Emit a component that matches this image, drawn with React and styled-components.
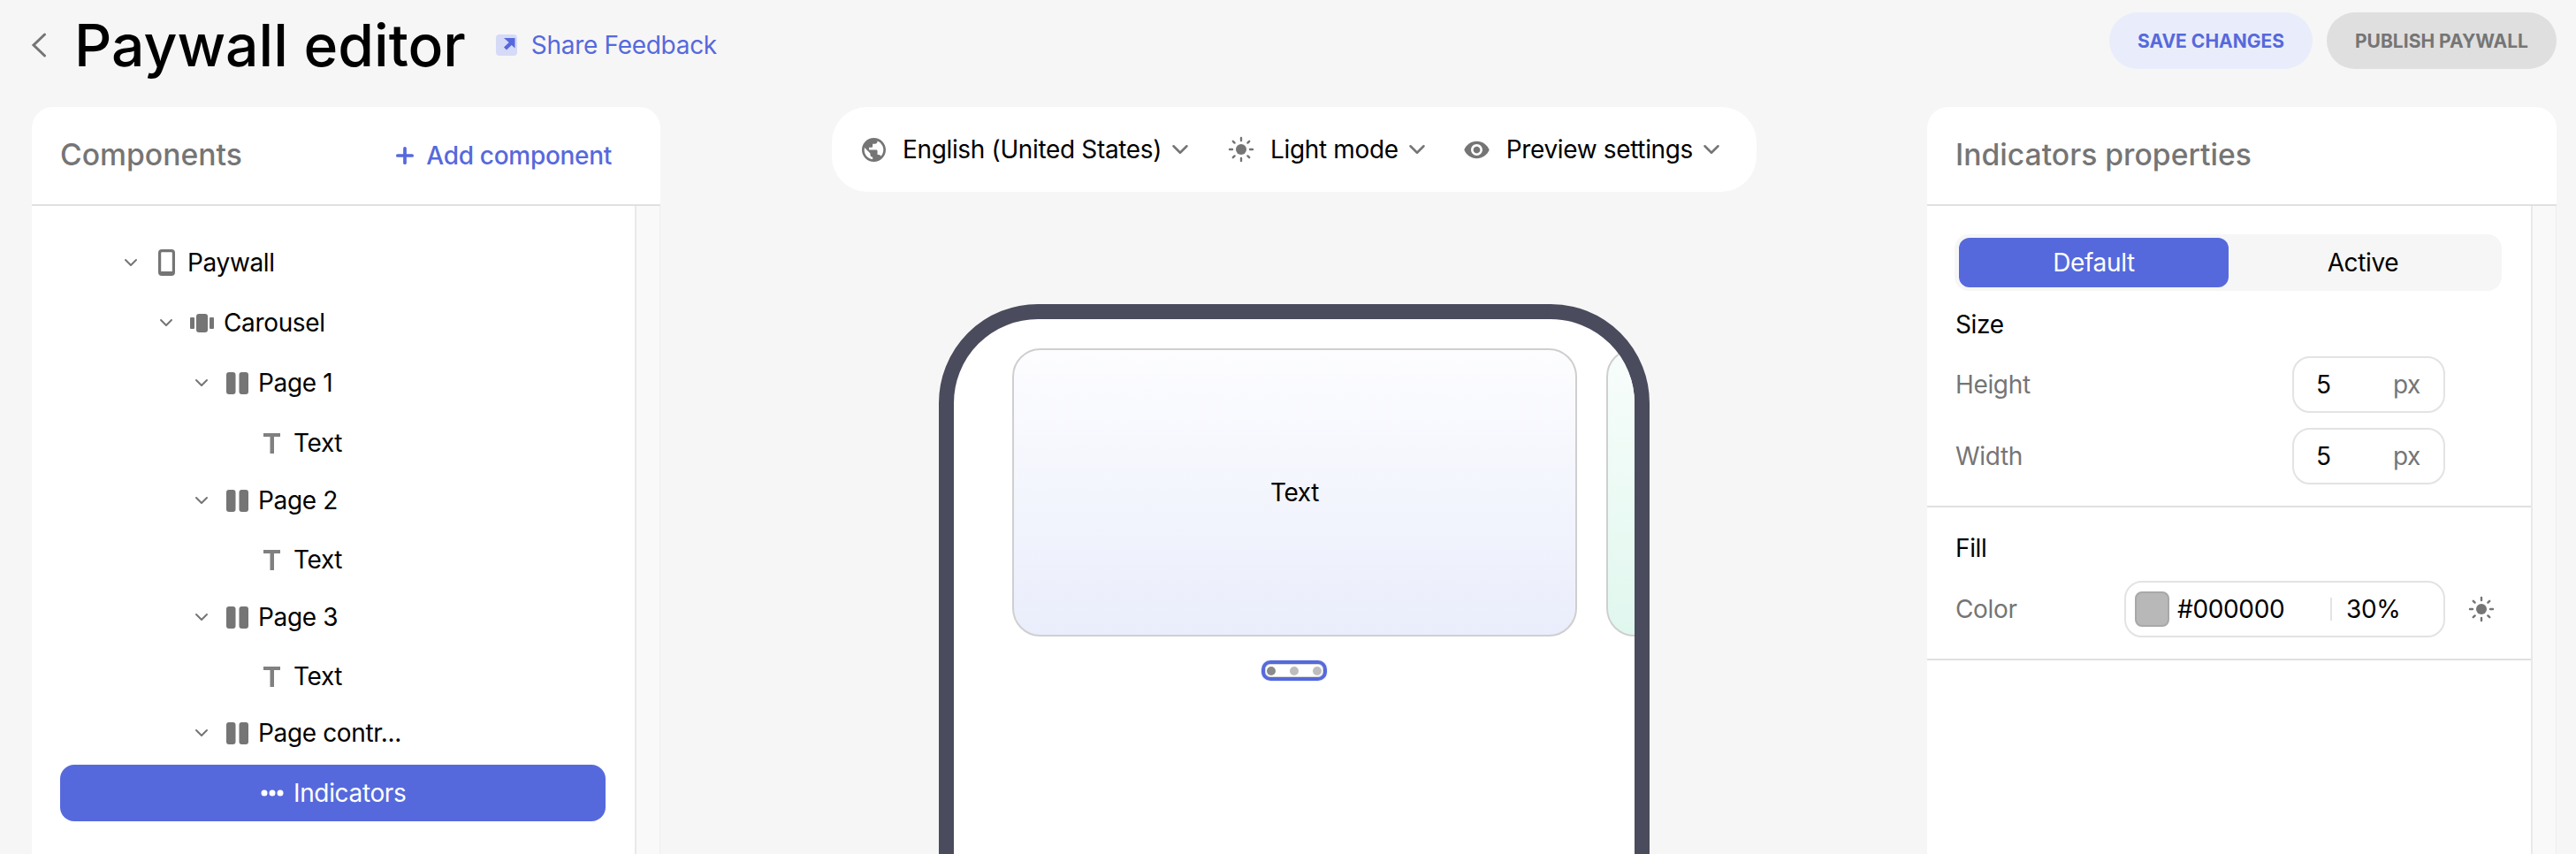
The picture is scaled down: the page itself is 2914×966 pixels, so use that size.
import React from 'react';
import styled, { createGlobalStyle } from 'styled-components';
import { ChevronDown, Plus } from 'lucide-react';

const Global = createGlobalStyle`
  html, body { margin: 0; padding: 0; background: #f6f6f6; }
  body { font-family: Inter, "Liberation Sans", sans-serif; color: #000; letter-spacing: -0.35px; }
  * { box-sizing: border-box; }
`;

const Page = styled.div`
  width: 2914px; height: 966px; overflow: hidden; background: #f6f6f6;
  display: flex; flex-direction: column;
`;
const TopBar = styled.header`
  height: 121px; flex: none; display: flex; padding: 14px 22px 0 30px; align-items: flex-start;
`;
const BackBtn = styled.div`
  width: 28px; height: 74px; display: flex; align-items: center; justify-content: center; margin-right: 26px;
`;
const Title = styled.h1`
  margin: 0; font-size: 66px; line-height: 74px; font-weight: 500; white-space: nowrap; letter-spacing: 0;
`;
const Feedback = styled.a`
  display: flex; align-items: center; gap: 16px; margin-left: 34px; height: 74px; color: #5669dc; font-size: 28px; letter-spacing: -0.3px;
`;
const FeedbackIcon = styled.span`
  width: 24px; height: 24px; border-radius: 4px; background: #d5daf6; display: flex; align-items: center; justify-content: center;
`;
const Actions = styled.div`
  margin-left: auto; display: flex; gap: 16px;
`;
const Pill = styled.button`
  height: 64px; width: ${p => p.$w}px; border: 0; border-radius: 32px; font: 700 21px Inter, sans-serif; padding: 0;
  background: ${p => p.$primary ? '#e9edfb' : '#dfdfdf'}; color: ${p => p.$primary ? '#5669dc' : '#757575'};
`;
const Workspace = styled.main`
  flex: 1; min-height: 0; display: grid; grid-template-columns: 711px 1fr 712px; padding: 0 22px 0 36px;
`;
const Panel = styled.section`
  background: #fff; border-radius: 24px 24px 0 0; display: flex; flex-direction: column; min-height: 0;
`;
const PanelHead = styled.div`
  height: 112px; flex: none; border-bottom: 2px solid #e0e0e0; padding: 0 32px 0 32px; display: flex; align-items: center; justify-content: space-between;
`;
const PanelTitle = styled.h2`
  margin: 0 0 4px; font-size: 33.7px; font-weight: 500; color: #757575; letter-spacing: 0;
`;
const AddBtn = styled.div`
  display: flex; align-items: center; gap: 10px; color: #5669dc; font-size: 28px; font-weight: 500; padding-right: 23px; letter-spacing: -0.3px;
`;
const PanelBody = styled.div`
  flex: 1; min-height: 0; display: grid; grid-template-columns: 1fr 29px;
`;
const Track = styled.div`
  background: #f9f9f9; border-left: 2px solid #e9e9e9; border-right: 1px solid #eee;
`;
const Tree = styled.div`
  padding: 32px 33px 0 32px; display: flex; flex-direction: column;
`;
const Row = styled.div`
  height: 64px; flex: none; display: flex; align-items: center; border-radius: 16px;
  margin-bottom: ${p => p.$after ?? 0}px;
  background: ${p => p.$selected ? '#5669dc' : 'transparent'};
  color: ${p => p.$selected ? '#fff' : '#000'};
  font-size: 28px;
`;
const Caret = styled.span`
  width: 24px; display: flex; justify-content: center; color: #757575; margin-left: ${p => p.$left}px; flex: none;
`;
const NodeIcon = styled.span`
  display: flex; justify-content: center; margin-left: ${p => p.$left ?? 0}px; width: ${p => p.$w}px; flex: none; margin-right: ${p => p.$right}px;
`;
const Center = styled.div`
  display: flex; flex-direction: column; align-items: center; min-width: 0; padding-left: 1px;
`;
const Toolbar = styled.div`
  width: 1046px; height: 96px; flex: none; background: #fff; border-radius: 40px; display: flex; align-items: center; padding: 0 30px; font-size: 28px;
`;
const Dropdown = styled.div`
  display: flex; align-items: center; margin-right: ${p => p.$mr}px; white-space: nowrap;
`;
const ToolIcon = styled.span`
  width: 34px; display: flex; justify-content: center; margin-right: 16px; color: #757575;
`;
const DropCaret = styled.span`
  display: flex; margin-left: 6px; color: #757575;
`;
const Phone = styled.div`
  width: 804px; height: 900px; flex: none; margin-top: 127px; border: 17px solid #4a4b5c; border-radius: 112px; background: #fff; overflow: hidden;
  display: flex; flex-direction: column;
`;
const Cards = styled.div`
  display: flex; gap: 33px; padding: 33px 0 0 66px; flex: none;
`;
const Card = styled.div`
  width: 639px; height: 326px; flex: none; border: 2px solid #cfcfcf; border-radius: 32px; font-size: 28px;
  display: flex; align-items: center; justify-content: center;
  background: linear-gradient(${p => p.$from}, ${p => p.$to});
`;
const Indicator = styled.div`
  align-self: center; width: 74px; height: 23px; margin-top: 27px; border: 4px solid #5669dc; border-radius: 10px; padding: 0 2px; display: flex; align-items: center; justify-content: space-between;
  box-shadow: inset 0 0 0 1px #d8d8d8, 0 0 2px rgba(86, 105, 220, 0.4);
`;
const Dot = styled.i`
  width: 10px; height: 10px; border-radius: 50%; background: ${p => p.$on ? '#8a8a8a' : '#bdbdbd'};
`;
const PropsBody = styled.div`
  display: flex; flex-direction: column;
`;
const Section = styled.div`
  padding: ${p => p.$pt}px 0 24px 32px; border-bottom: 2px solid #e0e0e0; display: flex; flex-direction: column;
`;
const Tabs = styled.div`
  width: 619px; height: 64px; margin-left: -1px; background: #f6f6f6; border-radius: 16px; padding: 4px 5px; display: grid; grid-template-columns: 305px 1fr;
`;
const Tab = styled.div`
  border-radius: 12px; display: flex; align-items: center; justify-content: center; font-size: 28px;
  background: ${p => p.$active ? '#5669dc' : 'transparent'}; color: ${p => p.$active ? '#fff' : '#000'};
`;
const SectionLabel = styled.div`
  font-size: 28px; line-height: 34px; margin-top: ${p => p.$mt}px; margin-bottom: ${p => p.$mb}px;
`;
const PropRow = styled.div`
  display: grid; grid-template-columns: 1fr auto 97px; align-items: center; margin-bottom: ${p => p.$mb ?? 0}px;
`;
const PropLabel = styled.span`
  font-size: 28px; color: #757575;
`;
const NumberField = styled.div`
  width: 173px; height: 64px; border: 2px solid #e3e3e3; border-radius: 20px; padding: 0 26px 0 25px; display: flex; align-items: center; justify-content: space-between; font-size: 28px;
`;
const Unit = styled.span`
  color: #757575;
`;
const ColorField = styled.div`
  width: 363px; height: 64px; border: 2px solid #e3e3e3; border-radius: 20px; padding: 0 10px; display: flex; align-items: center; font-size: 28px;
`;
const Swatch = styled.span`
  width: 39px; height: 40px; border-radius: 8px; background: #b8b8b8; border: 2px solid #a8a8a8; margin-right: 9px; flex: none;
`;
const Hex = styled.span`
  width: 173px; flex: none;
`;
const Sep = styled.span`
  width: 2px; height: 26px; background: #e3e3e3; margin-right: 16px; flex: none;
`;
const SunSlot = styled.span`
  display: flex; padding-left: 26px; color: #757575;
`;

const Sun = ({ size = 30, color = '#757575' }) => (
  <svg width={size} height={size} viewBox="0 0 30 30" fill="none">
    <circle cx="15" cy="15" r="6" fill={color} />
    <g stroke={color} strokeWidth="2.4" strokeLinecap="round">
      <path d="M15 2v3M15 25v3M2 15h3M25 15h3M5.800 5.800 7.600 7.600M22.400 22.400l1.800 1.800M5.800 24.200 7.600 22.400M22.400 7.600l1.800-1.800" />
    </g>
  </svg>
);
const Globe = () => (
  <svg width="27" height="27" viewBox="2 2 20 20" fill="#757575">
    <path d="M12 2C6.480 2 2 6.480 2 12s4.480 10 10 10 10-4.480 10-10S17.520 2 12 2zm-1 17.930c-3.950-.49-7-3.850-7-7.930 0-.62.08-1.210.21-1.790L9 15v1c0 1.100.9 2 2 2v1.930zm6.900-2.540c-.26-.81-1-1.390-1.900-1.390h-1v-3c0-.55-.45-1-1-1H8v-2h2c.55 0 1-.45 1-1V7h2c1.100 0 2-.9 2-2v-.41c2.930 1.190 5 4.060 5 7.410 0 2.080-.8 3.970-2.100 5.390z" />
  </svg>
);
const Eye = () => (
  <svg width="31" height="31" viewBox="0 0 24 24" fill="#757575">
    <path d="M12 4.500C7 4.500 2.730 7.610 1 12c1.730 4.390 6 7.500 11 7.500s9.270-3.110 11-7.500c-1.730-4.390-6-7.500-11-7.500zM12 17c-2.760 0-5-2.240-5-5s2.240-5 5-5 5 2.240 5 5-2.240 5-5 5zm0-8c-1.660 0-3 1.340-3 3s1.340 3 3 3 3-1.340 3-3-1.340-3-3-3z" />
  </svg>
);
const PhoneIcon = () => (
  <svg width="19" height="30" viewBox="0 0 19 30">
    <rect x="1.600" y="1.600" width="15.800" height="26.800" rx="2.500" fill="none" stroke="#757575" strokeWidth="3.200" />
    <rect x="1" y="25" width="17" height="4" fill="#757575" />
  </svg>
);
const CarouselIcon = () => (
  <svg width="27" height="21" viewBox="0 0 27 21" fill="#757575">
    <rect x="0" y="4" width="5" height="13" rx="1" />
    <rect x="7" y="0" width="13" height="21" rx="3" />
    <rect x="22" y="4" width="5" height="13" rx="1" />
  </svg>
);
const ColumnsIcon = () => (
  <svg width="25" height="25" viewBox="0 0 25 25" fill="#757575">
    <rect x="0" y="0" width="10.500" height="25" rx="3" />
    <rect x="14.500" y="0" width="10.500" height="25" rx="3" />
  </svg>
);
const TextIcon = () => (
  <svg width="19" height="23" viewBox="0 0 19 23" fill="#808080">
    <path d="M0 0h19v4H12v19H7.500V4H0z" />
  </svg>
);
const DotsIcon = () => (
  <svg width="26" height="8" viewBox="0 0 26 8" fill="#fff">
    <circle cx="4" cy="4" r="3.500" /><circle cx="13" cy="4" r="3.500" /><circle cx="22" cy="4" r="3.500" />
  </svg>
);
const ArrowIcon = () => (
  <svg width="24" height="24" viewBox="0 0 24 24" fill="#5669dc">
    <path d="M9 4h12.500v11.500l-3.800-3.600-5.700 5.700-3-3 5.700-5.700z" />
  </svg>
);
const BackIcon = () => (
  <svg width="18" height="28" viewBox="0 0 18 28" fill="none" stroke="#757575" strokeWidth="3" strokeLinecap="round">
    <path d="M15.500 2 3 14l12.500 12" />
  </svg>
);

const tree = [
  { label: 'Paywall', caret: 68, icon: <PhoneIcon />, iw: 24, il: 16, ir: 12, after: 4 },
  { label: 'Carousel', caret: 108, icon: <CarouselIcon />, iw: 27, il: 15, ir: 11, after: 4 },
  { label: 'Page 1', caret: 148, icon: <ColumnsIcon />, iw: 25, il: 16, ir: 11, after: 4 },
  { label: 'Text', icon: <TextIcon />, iw: 19, il: 230, ir: 15, after: 1 },
  { label: 'Page 2', caret: 148, icon: <ColumnsIcon />, iw: 25, il: 16, ir: 11, after: 3 },
  { label: 'Text', icon: <TextIcon />, iw: 19, il: 230, ir: 15, after: 1 },
  { label: 'Page 3', caret: 148, icon: <ColumnsIcon />, iw: 25, il: 16, ir: 11, after: 3 },
  { label: 'Text', icon: <TextIcon />, iw: 19, il: 230, ir: 15, after: 0 },
  { label: 'Page contr...', caret: 148, icon: <ColumnsIcon />, iw: 25, il: 16, ir: 11, after: 4 },
  { label: 'Indicators', icon: <DotsIcon />, iw: 26, il: 227, ir: 11, selected: true },
];

export default function App() {
  return (
    <Page>
      <Global />
      <TopBar>
        <BackBtn><BackIcon /></BackBtn>
        <Title>Paywall editor</Title>
        <Feedback>
          <FeedbackIcon><ArrowIcon /></FeedbackIcon>
          Share Feedback
        </Feedback>
        <Actions>
          <Pill $primary $w={230}>SAVE CHANGES</Pill>
          <Pill $w={260}>PUBLISH PAYWALL</Pill>
        </Actions>
      </TopBar>
      <Workspace>
        <Panel>
          <PanelHead>
            <PanelTitle>Components</PanelTitle>
            <AddBtn><Plus size={28} strokeWidth={3.2} />Add component</AddBtn>
          </PanelHead>
          <PanelBody>
            <Tree>
              {tree.map((n, i) => (
                <Row key={i} $after={n.after} $selected={n.selected}>
                  {n.caret != null && <Caret $left={n.caret}><ChevronDown size={28} strokeWidth={2} /></Caret>}
                  <NodeIcon $left={n.il} $w={n.iw} $right={n.ir}>{n.icon}</NodeIcon>
                  {n.label}
                </Row>
              ))}
            </Tree>
            <Track />
          </PanelBody>
        </Panel>
        <Center>
          <Toolbar>
            <Dropdown $mr={37}>
              <ToolIcon><Globe /></ToolIcon>English (United States)
              <DropCaret><ChevronDown size={30} strokeWidth={2} /></DropCaret>
            </Dropdown>
            <Dropdown $mr={36}>
              <ToolIcon><Sun /></ToolIcon>Light mode
              <DropCaret><ChevronDown size={30} strokeWidth={2} /></DropCaret>
            </Dropdown>
            <Dropdown $mr={0}>
              <ToolIcon><Eye /></ToolIcon>Preview settings
              <DropCaret><ChevronDown size={30} strokeWidth={2} /></DropCaret>
            </Dropdown>
          </Toolbar>
          <Phone>
            <Cards>
              <Card $from="#fdfdff" $to="#eaedfb">Text</Card>
              <Card $from="#f8fdfb" $to="#e0f7ee" />
            </Cards>
            <Indicator><Dot $on /><Dot /><Dot /></Indicator>
          </Phone>
        </Center>
        <Panel>
          <PanelHead><PanelTitle>Indicators properties</PanelTitle></PanelHead>
          <PanelBody>
            <PropsBody>
              <Section $pt={32}>
                <Tabs><Tab $active>Default</Tab><Tab>Active</Tab></Tabs>
                <SectionLabel $mt={21} $mb={19}>Size</SectionLabel>
                <PropRow $mb={17}>
                  <PropLabel>Height</PropLabel>
                  <NumberField>5<Unit>px</Unit></NumberField>
                  <span />
                </PropRow>
                <PropRow>
                  <PropLabel>Width</PropLabel>
                  <NumberField>5<Unit>px</Unit></NumberField>
                  <span />
                </PropRow>
              </Section>
              <Section $pt={29}>
                <SectionLabel $mt={0} $mb={20}>Fill</SectionLabel>
                <PropRow>
                  <PropLabel>Color</PropLabel>
                  <ColorField>
                    <Swatch />
                    <Hex>#000000</Hex>
                    <Sep />
                    30%
                  </ColorField>
                  <SunSlot><Sun /></SunSlot>
                </PropRow>
              </Section>
            </PropsBody>
            <Track />
          </PanelBody>
        </Panel>
      </Workspace>
    </Page>
  );
}
